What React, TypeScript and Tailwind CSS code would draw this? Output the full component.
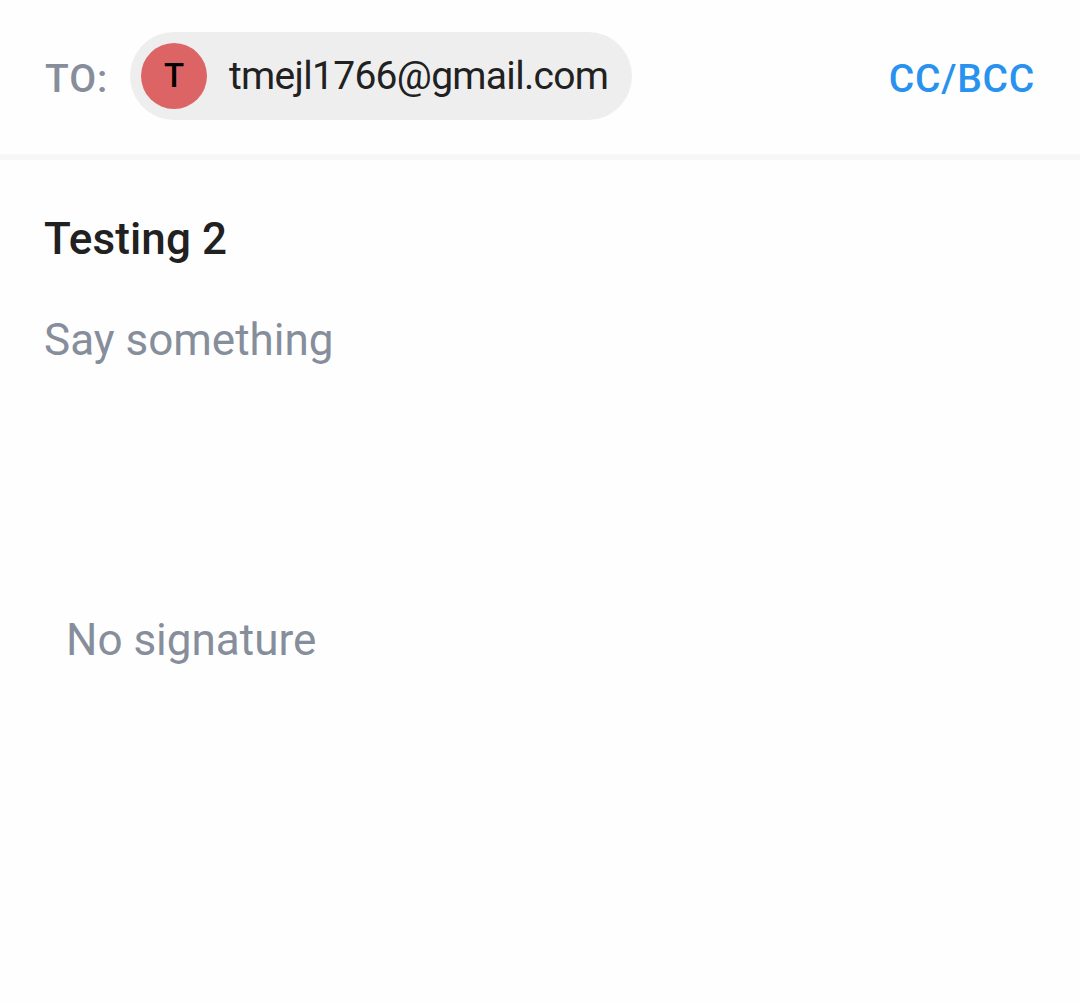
export default function App() {
  return (
    <main className="flex h-[1003px] w-full flex-col bg-[#fefefe] font-[Roboto,sans-serif]">
      <header className="flex h-40 shrink-0 items-start border-b-6 border-[#f7f7f7] pt-8 pr-[45px] pl-[45px]">
        <span className="mt-6 w-[85px] text-[39px] leading-[47px] font-medium tracking-[0.9px] text-[#868e9b]">TO:</span>
        <div className="flex h-[88px] w-[502px] items-center rounded-full bg-[#eeeeee] pl-[11px]">
          <span className="flex size-[66px] items-center justify-center rounded-full bg-[#dc6465] text-[33px] leading-[40px] font-medium text-black">T</span>
          <span className="ml-[22px] text-[39px] leading-[46px] tracking-[-0.7px] whitespace-nowrap text-[#212121]">tmejl1766@gmail.com</span>
        </div>
        <button className="mt-6 ml-auto text-[39px] leading-[47px] font-medium tracking-[0.75px] whitespace-nowrap text-[#2892ee]">CC/BCC</button>
      </header>
      <h1 className="mt-[53px] ml-[44px] text-[44px] leading-[52px] font-medium tracking-[0.1px] text-[#212121]">Testing 2</h1>
      <p className="mt-[49px] ml-[44px] text-[44px] leading-[52px] text-[#868e9b]">Say something</p>
      <p className="mt-[248px] ml-[66px] text-[44px] leading-[52px] text-[#868e9b]">No signature</p>
    </main>
  );
}
